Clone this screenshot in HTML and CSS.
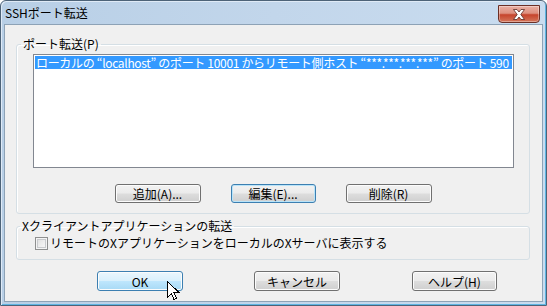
FILE: index.html
```html
<!DOCTYPE html>
<html lang="ja">
<head>
<meta charset="utf-8">
<title>SSHポート転送</title>
<link rel="stylesheet" href="styles.css">
</head>
<body>
<div class="window">
  <div class="titlebar">
    <span class="title">SSHポート転送</span>
    <div class="close">
      <svg width="30" height="15" viewBox="0 0 30 15">
        <path d="M9.5 2.5 L13 2.5 L15 5 L17 2.5 L20.5 2.5 L16.8 7.5 L20.5 12.5 L17 12.5 L15 10 L13 12.5 L9.5 12.5 L13.2 7.5 Z" fill="#fff" stroke="#5a2a22" stroke-width="0.8" stroke-linejoin="round"/>
      </svg>
    </div>
  </div>
  <div class="client">
    <fieldset class="group group-fwd">
      <legend class="legend">ポート転送(P)</legend>
      <div class="listbox">
        <div class="item selected">ローカルの “localhost” のポート 10001 からリモート側ホスト “***.***.***.***” のポート 590</div>
      </div>
      <div class="btnrow">
        <button class="btn">追加(A)...</button>
        <button class="btn btn-default">編集(E)...</button>
        <button class="btn">削除(R)</button>
      </div>
    </fieldset>
    <fieldset class="group group-x">
      <legend class="legend">Xクライアントアプリケーションの転送</legend>
      <label class="check"><span class="box"></span><span class="check-text">リモートのXアプリケーションをローカルのXサーバに表示する</span></label>
    </fieldset>
    <div class="dlgbuttons">
      <button class="btn btn-hover">OK</button>
      <button class="btn">キャンセル</button>
      <button class="btn btn-help">ヘルプ(H)</button>
    </div>
  </div>
  <svg class="cursor" width="13" height="20" viewBox="0 0 13 20" shape-rendering="crispEdges">
    <path d="M0.5 0.5 L0.5 16.5 L4.5 12.5 L7 18.5 L9.5 17.5 L7 11.5 L12 11.5 Z" fill="#fff" stroke="#000" stroke-width="1" stroke-linejoin="miter"/>
  </svg>
</div>
</body>
</html>
```
FILE: styles.css
```css
* { box-sizing: border-box; }
html, body { margin: 0; padding: 0; }
body {
  width: 547px;
  height: 306px;
  overflow: hidden;
  background: #fff;
  font-family: "Noto Sans CJK JP", "Noto Sans", sans-serif;
  font-size: 12px;
  color: #000;
}
.window {
  position: relative;
  width: 547px;
  height: 306px;
  border: 1px solid #4d6378;
  border-radius: 6px 6px 0 0;
  background: linear-gradient(90deg, #b8cfe6 0%, #c2d6eb 50%, #c9dcef 100%);
  padding: 0 3px 3px 3px;
  display: flex;
  flex-direction: column;
  box-shadow: inset 1px 1px 0 #dfeaf6, inset -1px -1px 0 #5fb5e3;
}
.titlebar {
  height: 23px;
  display: flex;
  align-items: center;
  justify-content: space-between;
  flex: none;
}
.title {
  padding-left: 1px;
  font-size: 12px;
  line-height: 14px;
  color: #000;
  margin-top: 1px;
}
.close {
  width: 42px;
  height: 18px;
  margin-top: 4px;
  margin-right: 3px;
  border: 1px solid #6b2f25;
  border-radius: 0 0 4px 4px;
  background: linear-gradient(#eab0a3 0%, #de907f 45%, #c6442c 55%, #d4765a 100%);
  box-shadow: inset 0 0 0 1px rgba(255,255,255,0.35);
  display: flex;
  align-items: center;
  justify-content: center;
  align-self: flex-start;
}
.client {
  flex: 1;
  background: #f0f0f0;
  border: 1px solid #8da2b6;
  display: flex;
  flex-direction: column;
  padding-top: 12px;
}
.group {
  margin: 0 12px 0 11px;
  border: 1px solid #d5dfe5;
  border-radius: 3px;
  min-width: 0;
  box-shadow: inset 1px 1px 0 #fff;
}
.legend {
  padding: 0 2px;
  line-height: 14px;
  height: 14px;
  font-size: 12px;
}
.group-fwd {
  padding: 3px 15px 10px 16px;
}
.group-fwd .legend { margin-left: -12px; }
.listbox {
  width: 481px;
  height: 114px;
  border: 1px solid #828790;
  background: #fff;
  padding: 1px;
  overflow: hidden;
}
.item {
  height: 13px;
  line-height: 13px;
  white-space: nowrap;
  overflow: hidden;
  padding-left: 1px;
  font-size: 12px;
  letter-spacing: -0.32px;
}
.item.selected {
  background: #3399ff;
  color: #fff;
}
.btnrow {
  margin-top: 16px;
  display: flex;
  justify-content: center;
  gap: 30px;
  padding-right: 1px;
}
.btn {
  width: 86px;
  height: 19px;
  padding: 0;
  margin: 0;
  font-family: inherit;
  font-size: 12px;
  line-height: 15px;
  color: #000;
  border: 1px solid #707070;
  border-radius: 3px;
  background: linear-gradient(#f2f2f2 0%, #ebebeb 48%, #dddddd 52%, #cfcfcf 100%);
  box-shadow: inset 0 0 0 1px #fcfcfc;
}
.btn-default {
  width: 85px;
  border-color: #3c7fb1;
  box-shadow: inset 0 0 0 1px #b9e4f9;
}
.btn-hover {
  border-color: #3c7fb1;
  background: linear-gradient(#eaf6fd 0%, #d9f0fc 48%, #bee6fd 52%, #a7d9f5 100%);
}
.group-x {
  margin-top: 5px;
  padding: 2px 12px 8px 18px;
}
.group-x .legend { margin-left: -15px; }
.check {
  display: flex;
  align-items: center;
  height: 16px;
  line-height: 16px;
}
.box {
  width: 13px;
  height: 13px;
  border: 1px solid #8e8f8f;
  background: linear-gradient(135deg, #dcdcdc 0%, #f0f0f0 60%, #fbfbfb 100%);
  box-shadow: inset 0 0 0 1px #f4f4f4, inset 0 0 0 2px #c8cacd;
  margin-right: 2px;
  flex: none;
}
.dlgbuttons {
  margin-top: 11px;
  padding-left: 92px;
  display: flex;
  gap: 71px;
}
.dlgbuttons .btn {
  height: 20px;
}
.dlgbuttons .btn-help { width: 85px; margin-left: 1px; }
.cursor {
  position: absolute;
  left: 166px;
  top: 280px;
}
```
